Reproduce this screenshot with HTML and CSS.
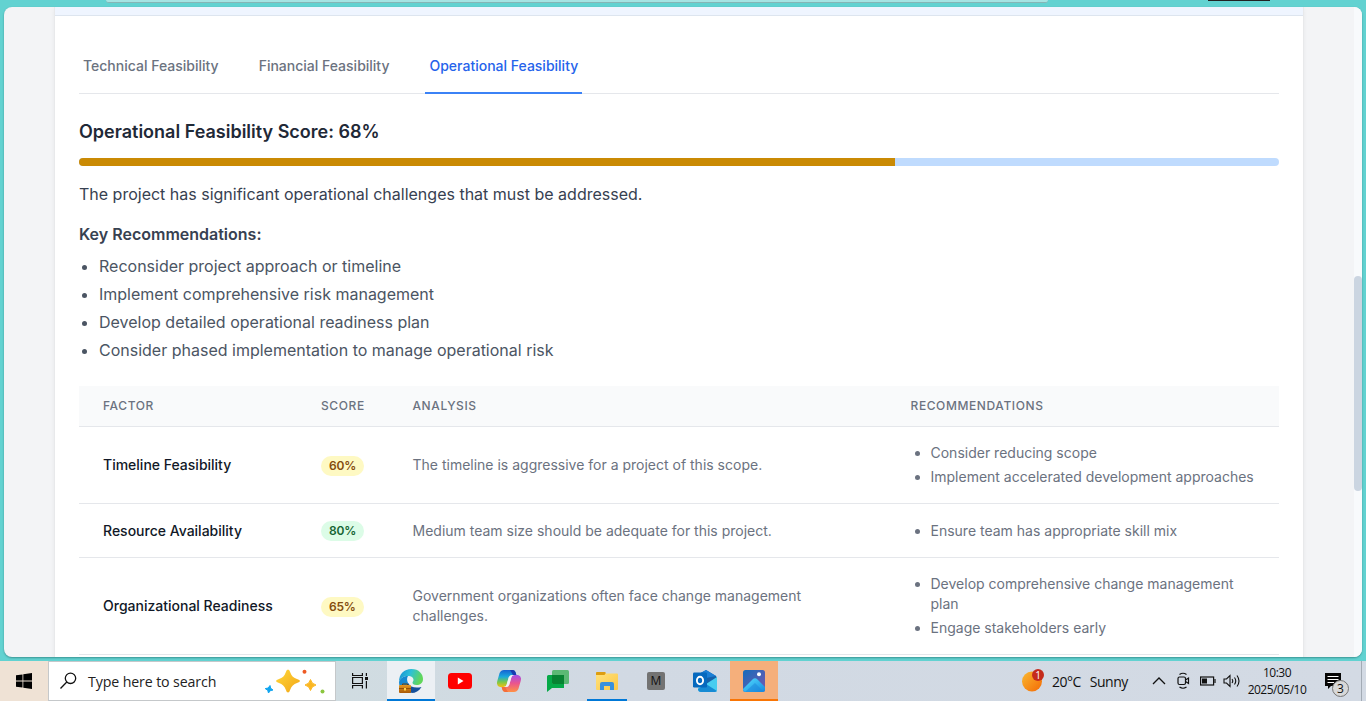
FILE: index.html
```html
<!DOCTYPE html>
<html lang="en">
<head>
<meta charset="utf-8">
<title>Feasibility Analysis</title>
<link rel="stylesheet" href="styles.css">
</head>
<body>
<div class="desktop">
  <div class="browser-top"><span class="address-edge"></span><span class="button-edge"></span></div>
  <div class="viewport">
    <main class="page">
      <section class="card">
        <div class="card-header"></div>
        <div class="card-body">
          <nav class="tabs">
            <a class="tab">Technical Feasibility</a>
            <a class="tab">Financial Feasibility</a>
            <a class="tab tab-active">Operational Feasibility</a>
          </nav>
          <h3 class="score-title">Operational Feasibility Score: 68%</h3>
          <div class="progress"><div class="progress-fill" style="width:68%"></div></div>
          <p class="summary">The project has significant operational challenges that must be addressed.</p>
          <h4 class="rec-title">Key Recommendations:</h4>
          <ul class="rec-list">
            <li>Reconsider project approach or timeline</li>
            <li>Implement comprehensive risk management</li>
            <li>Develop detailed operational readiness plan</li>
            <li>Consider phased implementation to manage operational risk</li>
          </ul>
          <table class="factors">
            <colgroup><col class="c-factor"><col class="c-score"><col class="c-analysis"><col class="c-rec"></colgroup>
            <thead><tr><th>Factor</th><th>Score</th><th>Analysis</th><th>Recommendations</th></tr></thead>
            <tbody>
              <tr class="row-a"><td class="name">Timeline Feasibility</td><td><span class="badge yellow">60%</span></td><td>The timeline is aggressive for a project of this scope.</td><td><ul><li>Consider reducing scope</li><li class="one-line">Implement accelerated development approaches</li></ul></td></tr>
              <tr class="row-b"><td class="name">Resource Availability</td><td><span class="badge green">80%</span></td><td>Medium team size should be adequate for this project.</td><td><ul><li>Ensure team has appropriate skill mix</li></ul></td></tr>
              <tr class="row-c"><td class="name">Organizational Readiness</td><td><span class="badge yellow">65%</span></td><td>Government organizations often face change management challenges.</td><td><ul><li>Develop comprehensive change management plan</li><li>Engage stakeholders early</li></ul></td></tr>
            </tbody>
          </table>
        </div>
      </section>
    </main>
    <div class="scrollbar"><div class="thumb"></div></div>
  </div>
  <footer class="taskbar">
    <div class="start"><svg width="16" height="16" viewBox="0 0 16 16"><path d="M0 2.3 6.5 1.4V7.6H0zM7.3 1.2 16 0V7.6H7.3zM0 8.4H6.5V14.6L0 13.7zM7.3 8.4H16V16L7.3 14.8z"/></svg></div>
    <div class="search">
      <svg class="lens" width="18" height="18" viewBox="0 0 18 18" fill="none" stroke="#111" stroke-width="1.3"><circle cx="10.500" cy="6.300" r="5.200"/><path d="M6.800 10 .5 16.500"/></svg>
      <span class="search-text">Type here to search</span>
      <svg class="sparkles" width="62" height="26" viewBox="0 0 62 26">
        <defs><linearGradient id="gold" x1="0" y1="0" x2="1" y2="1"><stop offset="0" stop-color="#ffd83b"/><stop offset="1" stop-color="#f2a516"/></linearGradient></defs>
        <path d="M24 1.5Q25.5 1.5 26.3 4.5 28 9.500 33 11 36 12 36 13T33 15Q28 16.500 26.300 21.500 25.500 24.500 24 24.500T21.700 21.500Q20 16.500 15 15 12 14 12 13T15 11Q20 9.500 21.700 4.500 22.500 1.500 24 1.500z" fill="url(#gold)"/>
        <path d="M46.500 11.500Q47.500 16 52 17 47.500 18 46.500 22.500 45.500 18 41 17 45.500 16 46.500 11.500z" fill="#fbb722" stroke="#fbb722"/>
        <path d="M6 17.500 6.700 20.300 9 22 6.200 22.700 4.500 25 3.700 22.300 1.200 20.600 4.200 20z" fill="#10a5f0" stroke="#10a5f0" stroke-linejoin="round"/>
        <circle cx="40.500" cy="3.800" r="2" fill="#ee5a24"/><circle cx="58.500" cy="23.500" r="2" fill="#8bc63f"/>
      </svg>
    </div>
    <div class="apps">
      <div class="app view"><svg width="18" height="18" viewBox="0 0 18 18" fill="none" stroke="#111" stroke-width="1.200"><path d="M1.600 1V3.500H11.400V1M1.600 16.500V13.500H11.400V16.500M1.600 5.500H11.400V11.500H1.600zM15.400 1V4M15.400 9V16.500"/><rect x="14" y="5" width="3" height="3" fill="#111" stroke="none"/></svg></div>
      <div class="app edge"><svg width="24" height="24" viewBox="0 0 24 24">
        <defs><linearGradient id="e1" x1="0" y1="0" x2="1" y2=".3"><stop offset="0" stop-color="#168bd2"/><stop offset=".5" stop-color="#2dc0d8"/><stop offset="1" stop-color="#61d75a"/></linearGradient><linearGradient id="case" x2="0" y2="1"><stop stop-color="#e59822"/><stop offset="1" stop-color="#a95805"/></linearGradient></defs>
        <path d="M0 13C0 5 5 0 12.500 0 20 0 24 5 24 10c0 4-3 6-6.500 6-3 0-4-1-4-2.200 0-1 1-1.300 1-3C14.500 8.500 12 7 9 7 4 7 1 9.500 0 13z" fill="url(#e1)"/><path d="M0 13C1 9.500 4 7 9 7 7.500 9 8 12 9 14L12 18V24C5 24 0 20 0 13z" fill="#1688d0"/><path d="M9 14C11 18 16 19.500 22.500 18 20 22 16.500 24 12.500 24L9 18z" fill="#14509b"/><path d="M3.500 16.500v-1.500h5v1.500" fill="none" stroke="#704009"/><rect y="16" width="12" height="8" rx="1" fill="url(#case)"/><path d="M0 19.500H12" stroke="#874605" stroke-width=".8"/><rect x="5" y="19" width="2" height="2.500" fill="#ffd246"/></svg></div>
      <div class="app"><svg width="24" height="16" viewBox="0 0 24 16"><rect width="24" height="16" rx="3.500" fill="#f00"/><path d="M9.800 4.500 15.500 8 9.800 11.500z" fill="#fff"/></svg></div>
      <div class="app"><svg class="copilot" width="24" height="22" viewBox="0 0 24 22">
        <defs><linearGradient id="p1" x2="0" y2="1"><stop stop-color="#1561d3"/><stop offset=".4" stop-color="#1aa9dc"/><stop offset=".7" stop-color="#78c84b"/><stop offset="1" stop-color="#f4c010"/></linearGradient><linearGradient id="p2" x2="0" y2="1"><stop stop-color="#a24ee8"/><stop offset=".5" stop-color="#eb568c"/><stop offset="1" stop-color="#ff9144"/></linearGradient></defs>
        <path d="M7 0H15.500Q18 0 18.800 3L19.300 5H15Q12.500 5 11.700 7.500L9.500 15Q9 17 6.500 17H3Q-1 16 .3 11L2.600 3Q4 0 7 0z" fill="url(#p1)"/>
        <path d="M17 22H8.500Q6 22 5.200 19L4.700 17H9Q11.500 17 12.300 14.500L14.500 7Q15 5 17.500 5H21Q25 6 23.700 11L21.400 19Q20 22 17 22z" fill="url(#p2)"/>
        <path d="M11.700 7.500Q12.500 5 15 5H17.500Q15 5 14.500 7L12.300 14.500Q11.500 17 9 17H6.500Q9 17 9.500 15z" fill="#f0f2f5"/>
        <path d="M13 0h2.500Q18 0 18.800 3L19.300 5H16z" fill="#173bb0"/><path d="M4.700 17H8L11 22H8.500Q6 22 5.200 19z" fill="#f46d3a"/></svg></div>
      <div class="app"><svg width="22" height="22" viewBox="0 0 22 22"><path d="M1.500 5H17V18H5L0 22V6.500Q0 5 1.500 5z" fill="#05a947"/><rect x="5" width="17" height="14" rx="1.500" fill="#5bb974"/><path d="M5 5H17V14H6.500Q5 14 5 12.500z" fill="#078332"/></svg></div>
      <div class="app explorer"><svg width="22" height="18" viewBox="0 0 22 18"><defs><linearGradient id="folder" x2="1" y2="1"><stop stop-color="#ffe27e"/><stop offset="1" stop-color="#fcc846"/></linearGradient></defs><path d="M0 1Q0 0 1 0H8L10 1.500H21Q22 1.500 22 2.500V17Q22 18 21 18H1Q0 18 0 17z" fill="url(#folder)"/><path d="M0 3V1Q0 0 1 0H9.500V1.500L8.500 3z" fill="#dd9d11"/><path d="M4 18V12Q4 10 6 10H16Q18 10 18 12V18H14V14H8V18z" fill="#3991dd"/></svg></div>
      <div class="app"><span class="m-icon">M</span></div>
      <div class="app"><svg width="24" height="22" viewBox="0 0 24 22"><path d="M4 5 13 0 23 6V17H6z" fill="#1266b7"/><path d="M8 3 13 0 23 6 12 14z" fill="#1b7fd6"/><path d="M13 8 23 6 24 8 13 15z" fill="#1561aa"/><path d="M24 7V20Q24 22 21.500 22H8Q5 22 5 18L13 14z" fill="#48cdf0"/><path d="M13 14 24 21Q23 22 21.500 22H8Q5 22 5 19z" fill="#168bd4"/><rect y="2.500" width="14" height="15" rx="1.200" fill="#0669be"/><ellipse cx="7" cy="10.500" rx="3.100" ry="3.700" fill="none" stroke="#fff" stroke-width="1.900"/></svg></div>
      <div class="app photos"><svg width="22" height="22" viewBox="0 0 22 22"><defs><linearGradient id="sky" x2="1" y2="1"><stop stop-color="#146cbb"/><stop offset="1" stop-color="#7858b0"/></linearGradient><linearGradient id="hill" x2="1" y2="1"><stop stop-color="#55dfff"/><stop offset="1" stop-color="#1488e0"/></linearGradient></defs><rect width="22" height="22" rx="2.500" fill="url(#sky)"/><path d="M0 19 9.500 9.500Q12 7 14.500 9.500L22 17V19.500Q22 22 19.500 22H2.500Q0 22 0 19z" fill="url(#hill)"/><path d="M12 13 20 21 19 22H2z" fill="#1b83da" opacity=".5"/><circle cx="16" cy="4.200" r="2" fill="#fff"/></svg></div>
    </div>
    <div class="tray">
      <svg class="sun" width="24" height="24" viewBox="0 0 24 24"><defs><linearGradient id="sun" x2="1" y2="1"><stop stop-color="#f9b931"/><stop offset="1" stop-color="#f46a05"/></linearGradient></defs><circle cx="10" cy="12.500" r="10" fill="url(#sun)"/><circle cx="16" cy="6" r="6" fill="#c42b1c"/><text class="alert-num" x="16" y="9.500" text-anchor="middle">1</text></svg>
      <span class="weather"><span>20°C</span><span>Sunny</span></span>
      <svg class="chevron" width="14" height="8" viewBox="0 0 14 8" fill="none" stroke="#111" stroke-width="1.300"><path d="M1 7 7 1 13 7"/></svg>
      <svg class="meet" width="13" height="18" viewBox="0 0 13 18" fill="none" stroke="#111" stroke-width="1.200"><rect x="1" y="5" width="7.500" height="7.500" rx="1.500"/><path d="M8.500 8 11.500 6V11.500L8.500 9.500M2.500 2.500Q6 0 9.500 2.500M2.500 15Q6 17.500 9.500 15"/></svg>
      <svg class="battery" width="16" height="10" viewBox="0 0 16 10" fill="none" stroke="#111" stroke-width="1.200"><rect x=".6" y="1" width="13" height="8"/><path d="M15 3V7"/><rect x="2" y="2.500" width="5" height="5" fill="#111" stroke="none"/></svg>
      <svg class="volume" width="18" height="14" viewBox="0 0 18 14" fill="none" stroke="#111" stroke-width="1.100"><path d="M1 5H3.500L7 1.500V12.500L3.500 9H1zM9 5Q10.500 7 9 9M11.500 3.500Q14 7 11.500 10.500M14 1.500Q18 7 14 12.500"/></svg>
      <div class="clock"><span>10:30</span><span>2025/05/10</span></div>
      <svg class="notes" width="26" height="26" viewBox="0 0 26 26"><path d="M1 1H17V14H7L4 17V14H1z" fill="#050505"/><path d="M3.500 4.500H14.500M3.500 7.500H14.500M3.500 10.500H10" stroke="#fff"/><circle cx="16.500" cy="16.500" r="8" fill="#d8d8d8" stroke="#777"/><text class="note-num" x="16.500" y="21" text-anchor="middle">3</text></svg>
      <span class="show-desktop"></span>
    </div>
  </footer>
</div>
</body>
</html>
```
FILE: styles.css
```css
* { box-sizing: border-box; margin: 0; padding: 0; }
body { width: 1366px; height: 701px; overflow: hidden; font-family: Inter, sans-serif; background: #62d2d1; }
svg { display: block; flex: none; }
.desktop { height: 701px; display: flex; flex-direction: column; }
.browser-top { height: 7px; flex: none; display: flex; align-items: flex-start; padding-left: 106px; }
.address-edge { width: 942px; height: 3px; background: #a5e4e3; border-bottom: 1px solid #86b5b5; border-radius: 0 0 8px 8px; }
.button-edge { width: 62px; height: 1px; margin-left: 160px; background: #222; }
.viewport { height: 650px; flex: none; margin: 0 4px 4px; display: flex; overflow: hidden; border-radius: 8px; background: #f3f4f6; box-shadow: 0 1px 2px rgba(0, 60, 60, .4); }
.page { flex: 1; padding-left: 51px; }
.card { width: 1248px; height: 660px; background: #fff; box-shadow: 0 0 0 1px #e8e9eb, 0 2px 5px rgba(0, 0, 0, .08); }
.card-header { height: 9px; background: #eff5ff; border-bottom: 1px solid #dde5ef; }
.card-body { padding: 24px; }
.tabs { display: flex; gap: 32px; height: 54px; border-bottom: 1px solid #e5e7eb; }
.tab { height: 54px; padding: 16px 4px; border-bottom: 2px solid transparent; font-size: 14px; line-height: 20px; font-weight: 500; color: #6b7280; white-space: nowrap; }
.tab-active { color: #2563eb; border-color: #3b82f6; }
.score-title { margin-top: 24px; font-size: 18px; line-height: 28px; font-weight: 600; color: #1f2937; }
.progress { height: 8px; margin-top: 12px; border-radius: 8px; overflow: hidden; background: #bfdbfe; }
.progress-fill { height: 8px; background: #ca8a04; }
.summary { margin-top: 16px; font-size: 16px; line-height: 24px; color: #374151; }
.rec-title { margin-top: 16px; font-size: 16px; line-height: 24px; font-weight: 600; color: #374151; }
.rec-list { margin-top: 8px; padding-left: 20px; display: flex; flex-direction: column; gap: 4px; font-size: 16px; line-height: 24px; color: #4b5563; }
.factors { width: 1200px; margin-top: 24px; table-layout: fixed; border-collapse: separate; border-spacing: 0; font-size: 14px; line-height: 20px; color: #6b7280; }
.c-factor { width: 218px; }
.c-score { width: 91.500px; }
.c-analysis { width: 498px; }
.c-rec { width: 392.500px; }
.factors th { height: 41px; padding: 12px 24px; background: #f9fafb; border-bottom: 1px solid #e5e7eb; text-align: left; text-transform: uppercase; font-size: 12px; line-height: 16px; letter-spacing: .6px; font-weight: 500; }
.factors td { padding: 0 24px; border-bottom: 1px solid #e5e7eb; vertical-align: middle; }
.row-a td { height: 77px; }
.row-b td { height: 54px; }
.row-c td { height: 97px; }
.factors .name { color: #111827; font-weight: 500; white-space: nowrap; }
.factors ul { padding-left: 20px; display: flex; flex-direction: column; gap: 4px; }
.one-line { white-space: nowrap; }
.badge { display: inline-flex; padding: 0 8px; border-radius: 10px; font-size: 12px; line-height: 20px; font-weight: 600; letter-spacing: -.2px; vertical-align: middle; }
.yellow { background: #fef9c3; color: #854d0e; }
.green { background: #dcfce7; color: #166534; }
.scrollbar { width: 8px; padding-top: 269px; background: #f8fafc; }
.thumb { height: 215px; border-radius: 4px; background: #cbd5e1; }
.taskbar { height: 40px; flex: none; display: flex; background: linear-gradient(90deg, #efe2d5 0, #efe2d5 48px, #d0dce1 336px, #d1d9e3 600px, #d3dae4 100%); font-family: "Open Sans", sans-serif; color: #111; }
.start { width: 48px; display: flex; align-items: center; justify-content: center; }
.search { width: 288px; display: flex; align-items: center; background: #fff; border: 1px solid #c5c8ca; padding-left: 11px; }
.search-text { width: 176px; margin-left: 10px; font-size: 14.200px; white-space: nowrap; letter-spacing: -.12px; color: #222; }
.apps { display: flex; gap: 1px; }
.app { width: 48px; display: flex; align-items: center; justify-content: center; }
.view { width: 50px; padding-right: 2px; }
.edge { background: #ecf0f4; box-shadow: inset 0 -2px #0078d7; }
.explorer { width: 40px; margin: 0 4px; box-shadow: inset 0 -2px #0078d7; }
.photos { background: #f5af7b; box-shadow: inset 0 -2px #f97505; }
.m-icon { width: 18px; height: 18px; border-radius: 2px; background: #737373; color: #111; font: 12px/18px "Open Sans", sans-serif; text-align: center; }
.tray { margin-left: auto; display: flex; align-items: center; width: 344px; }
.weather { display: flex; gap: 9px; width: 84px; margin-left: 6px; font-size: 14px; letter-spacing: -.5px; white-space: nowrap; }
.chevron { margin-left: 16px; }
.meet { margin-left: 11px; }
.battery { margin-left: 10px; }
.volume { margin-left: 7px; }
.clock { width: 64px; margin-left: 4px; display: flex; flex-direction: column; align-items: center; font-size: 12px; line-height: 17px; letter-spacing: -.5px; }
.notes { margin-left: 15px; margin-top: 8px; }
.show-desktop { width: 1px; height: 40px; margin-left: 11px; background: #a3abb5; }
.alert-num { font: 10px "Open Sans", sans-serif; fill: #fff; }
.note-num { font: 12px "Open Sans", sans-serif; fill: #111; }
```
